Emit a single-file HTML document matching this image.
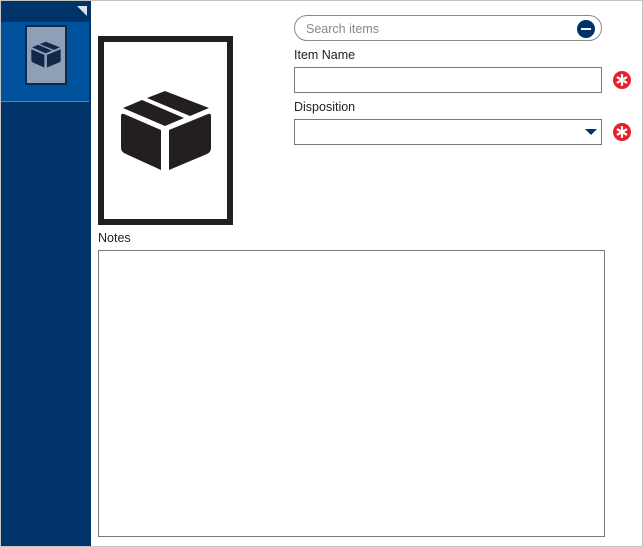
<!DOCTYPE html>
<html><head><style>
body{margin:0;width:643px;height:547px;background:#fff;font-family:"Liberation Sans",sans-serif;position:relative;overflow:hidden}
.a{position:absolute;box-sizing:border-box}
.lbl{font-size:12.5px;color:#222}
</style></head><body>
<div class="a" style="left:0;top:0;width:643px;height:547px;border:1px solid #c4c4c4"></div>
<div class="a" style="left:1px;top:1px;width:90px;height:545px;background:#003468"></div>
<div class="a" style="left:1px;top:22px;width:88px;height:80px;background:#00529c;border-bottom:1px solid #5a7fae"></div>
<div class="a" style="left:77px;top:6px;width:0;height:0;border-left:10px solid transparent;border-top:10px solid #dde3ea"></div>
<div class="a" style="left:25px;top:25px;width:42px;height:60px;background:#8ca0b6;border:2px solid #12284a"></div>
<svg class="a" style="left:31px;top:41px" width="30" height="27" viewBox="0 0 92 80"><g fill="#12284a"><path d="M3 18 L22 10 L64 28 L45 36 Z"/><path d="M27 8 L45 1 L89 18 L70 26 Z"/><path d="M1 24 L41 41 L41 80 L5 64 Q1 62 1 58 Z"/><path d="M49 41 L91 24 L91 58 Q91 62 87 64 L49 80 Z"/></g></svg>
<div class="a" style="left:98px;top:36px;width:135px;height:189px;border:6px solid #231f20;background:#fff"></div>
<svg class="a" style="left:120px;top:90px" width="92" height="80" viewBox="0 0 92 80"><g fill="#231f20"><path d="M3 18 L22 10 L64 28 L45 36 Z"/><path d="M27 8 L45 1 L89 18 L70 26 Z"/><path d="M1 26 Q1 23 4 24 L41 40 L41 80 L6 64 Q1 62 1 58 Z"/><path d="M49 40 L88 24 Q91 23 91 26 L91 58 Q91 62 87 64 L49 80 Z"/></g></svg>
<div class="a lbl" style="left:98px;top:231px">Notes</div>
<div class="a" style="left:98px;top:250px;width:507px;height:287px;border:1px solid #7a7a7a"></div>
<div class="a" style="left:294px;top:15px;width:308px;height:26px;border:1px solid #8a8a8a;border-radius:13px"></div>
<div class="a" style="left:306px;top:22px;font-size:12.5px;color:#888">Search items</div>
<div class="a" style="left:577px;top:20px;width:18px;height:18px;border-radius:50%;background:#003468"></div>
<div class="a" style="left:581px;top:28px;width:10px;height:1.5px;background:#fff"></div>
<div class="a lbl" style="left:294px;top:48px">Item Name</div>
<div class="a" style="left:294px;top:67px;width:308px;height:26px;border:1px solid #7a7a7a"></div>
<svg class="a" style="left:613px;top:71px" width="18" height="18" viewBox="0 0 18 18"><circle cx="9" cy="9" r="9" fill="#e8202a"/><g stroke="#fff" stroke-width="2.2" stroke-linecap="round"><path d="M9 4v10M4.7 6.5l8.6 5M4.7 11.5l8.6-5"/></g></svg>
<div class="a lbl" style="left:294px;top:100px">Disposition</div>
<div class="a" style="left:294px;top:119px;width:308px;height:26px;border:1px solid #7a7a7a"></div>
<div class="a" style="left:585px;top:129px;width:0;height:0;border-left:6px solid transparent;border-right:6px solid transparent;border-top:6px solid #003468"></div>
<svg class="a" style="left:613px;top:123px" width="18" height="18" viewBox="0 0 18 18"><circle cx="9" cy="9" r="9" fill="#e8202a"/><g stroke="#fff" stroke-width="2.2" stroke-linecap="round"><path d="M9 4v10M4.7 6.5l8.6 5M4.7 11.5l8.6-5"/></g></svg>
</body></html>
